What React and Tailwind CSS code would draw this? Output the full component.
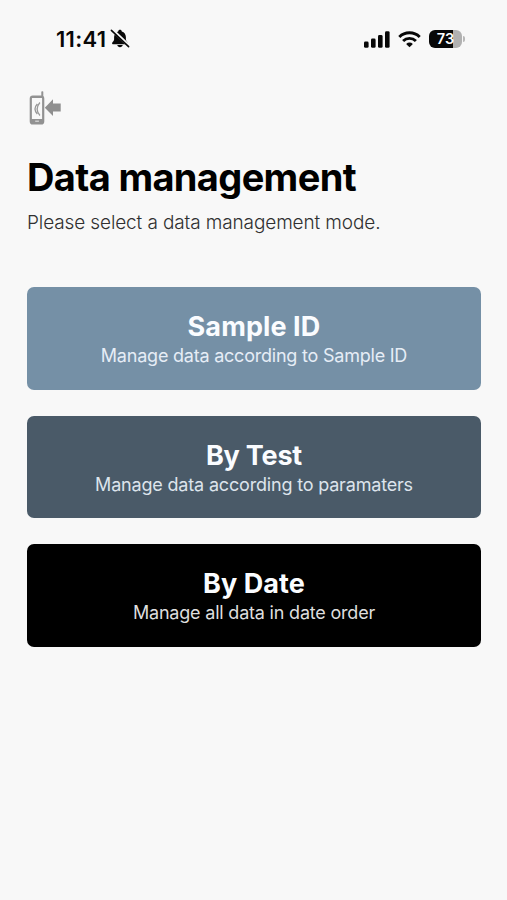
const modes = [
  { title: 'Sample ID', text: 'Manage data according to Sample ID', box: 'bg-[#7590a6]', titleStyle: 'tracking-[0.1px]', textStyle: 'text-[#e6edf6] tracking-[-0.22px]' },
  { title: 'By Test', text: 'Manage data according to paramaters', box: 'bg-[#4a5a68]', titleStyle: 'tracking-[-0.2px]', textStyle: 'text-[#dde4ec] tracking-[-0.18px]' },
  { title: 'By Date', text: 'Manage all data in date order', box: 'bg-black', titleStyle: 'tracking-[0.1px]', textStyle: 'text-[#dedede] tracking-[-0.2px]' },
];

function BellOff() {
  return (
    <svg className="ml-[4px] mt-[29px] h-[19px] w-[20px]" viewBox="0 0 20 19">
      <path d="M10 0.800c-1 0-1.700.7-1.800 1.600C5.600 3.100 4.200 5.200 4.100 8v2.200c0 1-.5 1.700-1.200 2.500-.7.800-.8 1.100-.8 1.500 0 .6.400 1 1.100 1h13.600c.7 0 1.100-.4 1.100-1 0-.4-.1-.7-.8-1.500-.7-.8-1.200-1.500-1.200-2.500V8c-.1-2.800-1.500-4.900-4.100-5.600C11.700 1.500 11 .8 10 .8zM7.300 16.100c.2 1.300 1.300 2.200 2.700 2.200s2.500-.9 2.700-2.200z" fill="#080808" />
      <path d="M2 0.600 19.500 17.300" stroke="#f8f8f8" strokeWidth="3.200" />
      <path d="M1.400 1.300 18.600 17.600" stroke="#080808" strokeWidth="1.600" strokeLinecap="round" />
    </svg>
  );
}

function Signal() {
  return (
    <svg className="h-[17px] w-[26px]" viewBox="0 0 26 17" fill="#080808">
      <rect x="0" y="10.500" width="4.600" height="6.300" rx="1.400" />
      <rect x="7" y="7.500" width="4.600" height="9.300" rx="1.400" />
      <rect x="14" y="4" width="4.600" height="12.800" rx="1.400" />
      <rect x="21" y="0.200" width="4.600" height="16.600" rx="1.400" />
    </svg>
  );
}

function Wifi() {
  return (
    <svg className="ml-[8px] h-[17px] w-[23px]" viewBox="0 0 23 17" fill="none" stroke="#080808" strokeWidth="2.900">
      <path d="M1.300 6a14.500 14.500 0 0 1 20.400 0" />
      <path d="M5.100 10a9.100 9.100 0 0 1 12.800 0" />
      <path d="M11.500 16.200 8.100 12.900q3.400-2.800 6.800 0z" fill="#080808" stroke="none" />
    </svg>
  );
}

function Battery() {
  return (
    <div className="ml-[8px] flex items-center">
      <div className="flex h-[18px] w-[33px] items-center justify-center overflow-hidden rounded-[6px] bg-[linear-gradient(90deg,#080808_0_74%,#b1b1b1_74%)] text-[14.5px] font-semibold leading-none text-white">
        73
      </div>
      <div className="ml-[1px] h-[6px] w-[2px] rounded-r-full bg-[#b8b8b8]" />
    </div>
  );
}

function PhoneTransfer() {
  return (
    <svg className="h-[35px] w-[34px]" viewBox="0 0 34 35">
      <rect x="12.300" y="0.200" width="2" height="8" rx=".8" fill="#929292" />
      <rect x="1.800" y="5.500" width="12.400" height="27" rx="2" fill="#f8f8f8" stroke="#929292" strokeWidth="2.200" />
      <path d="M1.600 28h12.800v3.200q0 1.500-1.500 1.500H3.100q-1.500 0-1.500-1.500z" fill="#929292" />
      <path d="M2 5h12v2H2z" fill="#929292" />
      <path d="M6.200 30.200h3.700" stroke="#dcdcdc" strokeWidth="1.200" />
      <path d="M8.300 13q-4.600 5 0 10M10.900 11.500q-5.600 6.500 0 13" fill="none" stroke="#989898" strokeWidth="1.300" />
      <path d="M15.800 16.700 24 8.300v4.300h7.700v8H24v4.400z" fill="#8f8f8f" />
    </svg>
  );
}

export default function App() {
  return (
    <div className="flex h-[900px] w-[507px] flex-col bg-[#f8f8f8] font-['Inter',sans-serif]">
      <header className="flex h-[78px] shrink-0 pl-[56px] pr-[42px]">
        <time className="mt-[26px] text-[22px] font-semibold leading-[26px] tracking-[0.3px] text-[#080808]">11:41</time>
        <BellOff />
        <div className="ml-auto mt-[30px] flex h-[18px] items-center">
          <Signal />
          <Wifi />
          <Battery />
        </div>
      </header>
      <main className="flex flex-col pl-[27px] pr-[26px]">
        <div className="ml-[2px] mt-[13px] h-[35px]"><PhoneTransfer /></div>
        <h1 className="mt-[29px] whitespace-nowrap text-[38px] font-bold leading-[44px] tracking-[-0.65px] text-black">Data management</h1>
        <p className="mt-[11px] whitespace-nowrap text-[19px] font-light leading-[26px] tracking-[-0.12px] text-[#303030]">Please select a data management mode.</p>
        <div className="mt-[51px] flex flex-col gap-[26px]">
          {modes.map((m) => (
            <button key={m.title} className={`flex h-[102.600px] flex-col items-center rounded-[7px] pt-[23px] text-center ${m.box}`}>
              <span className={`text-[27px] font-bold leading-[33px] text-[#fafcff] ${m.titleStyle}`}>{m.title}</span>
              <span className={`mt-px text-[18px] font-normal leading-[24px] ${m.textStyle}`}>{m.text}</span>
            </button>
          ))}
        </div>
      </main>
    </div>
  );
}
